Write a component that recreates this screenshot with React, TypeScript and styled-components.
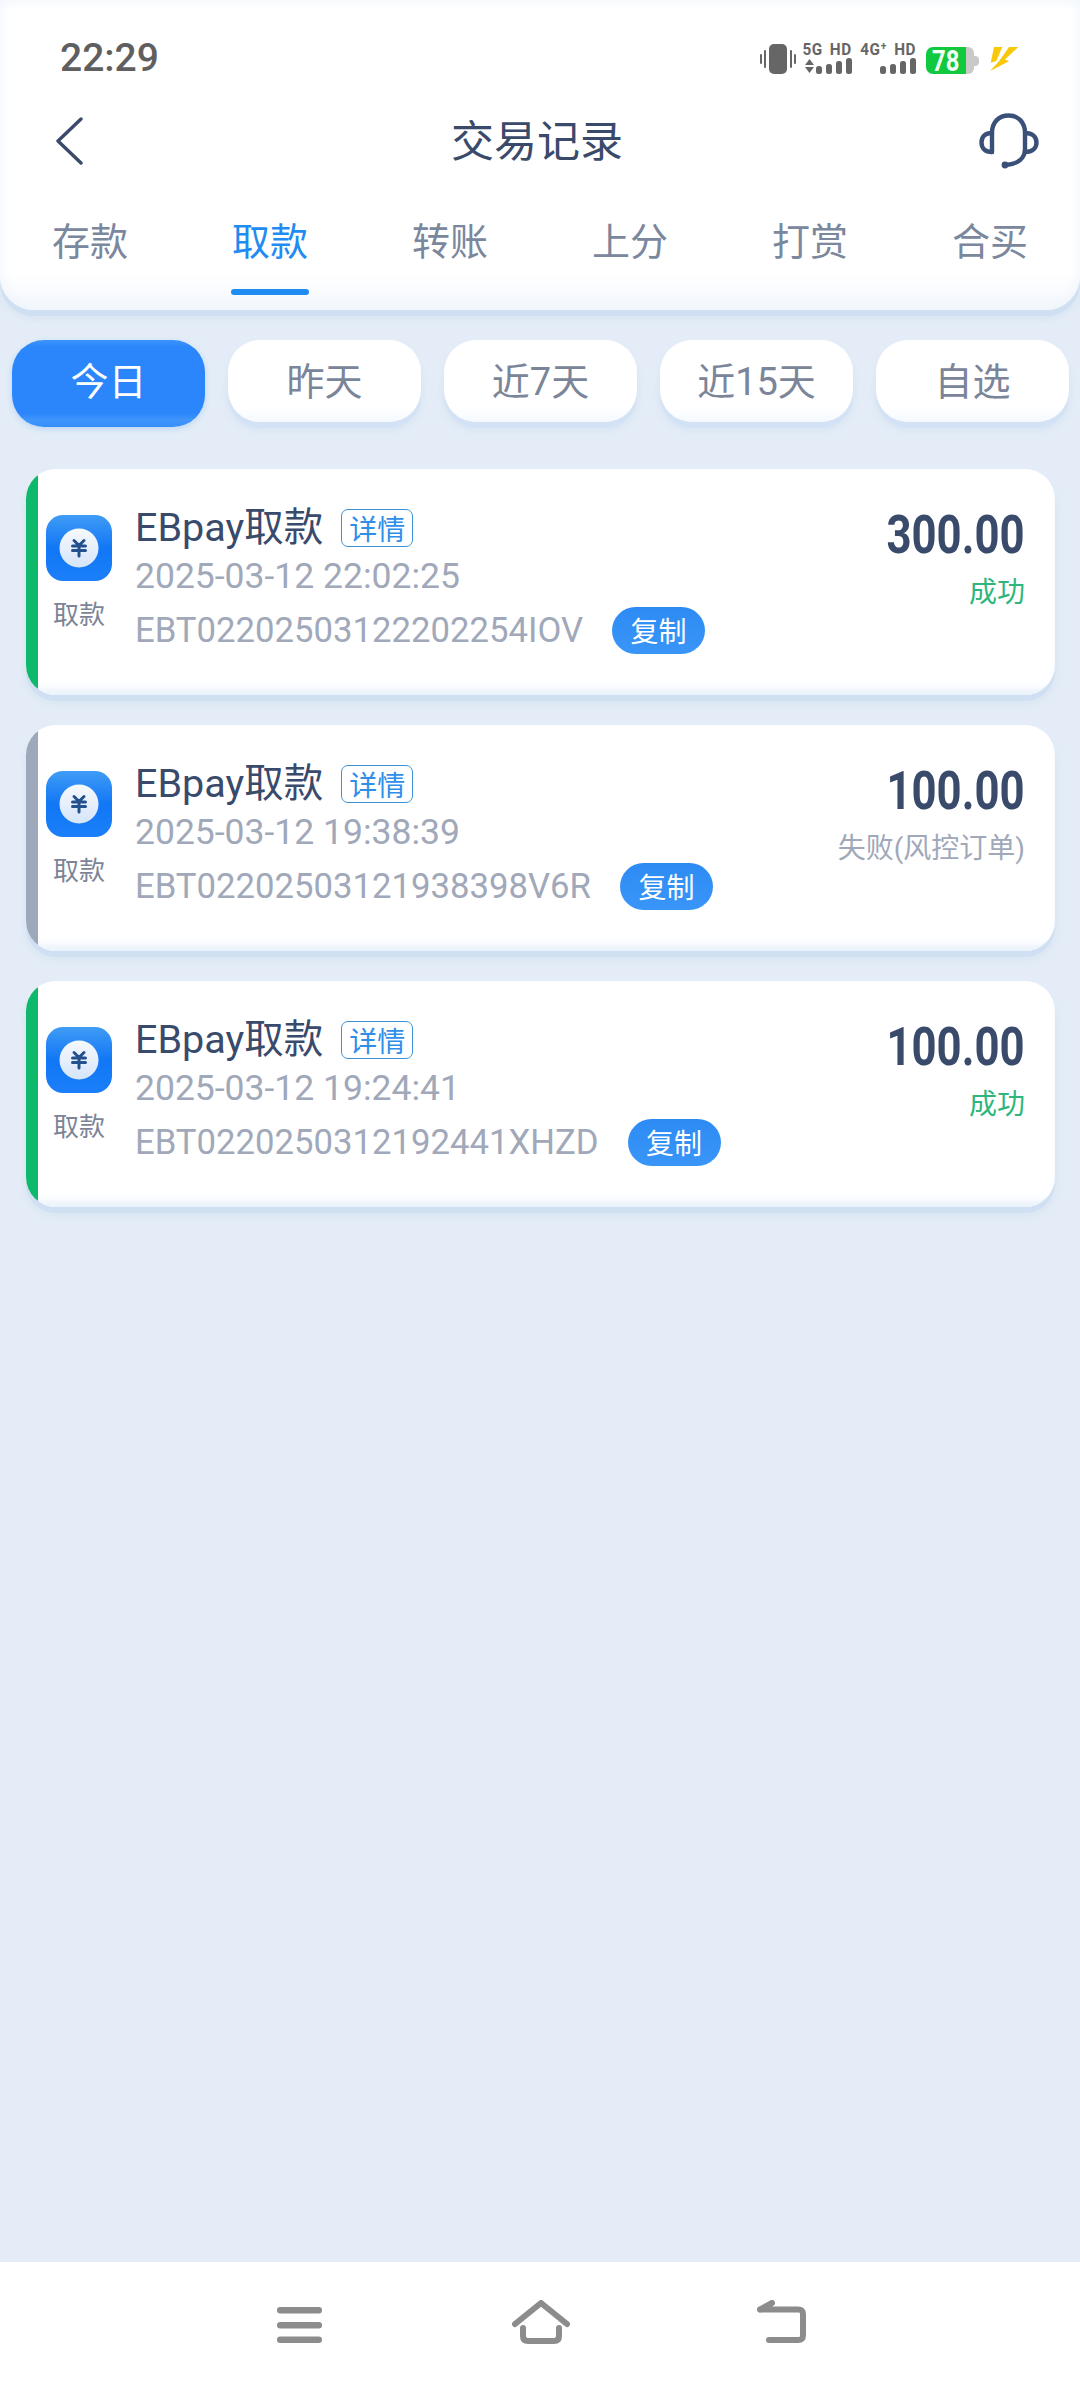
import React from "react";
import styled, { createGlobalStyle } from "styled-components";

const CJK = `"Roboto", "Noto Sans CJK SC", sans-serif`;

const GlobalStyle = createGlobalStyle`
  html, body {
    margin: 0;
    padding: 0;
    background: #e4edf7;
    font-family: ${CJK};
  }
  * {
    box-sizing: border-box;
  }
`;

const Page = styled.div`
  display: flex;
  flex-direction: column;
  width: 1080px;
  height: 2388px;
  overflow: hidden;
  background: #e4edf7;
`;

const Header = styled.header`
  height: 310px;
  background: linear-gradient(#fff 88%, #f3f7fd 100%);
  border-radius: 0 0 34px 34px;
  box-shadow: 0 6px 0 #cfe0f3, 0 8px 10px rgba(190, 210, 235, 0.35), inset 0 0 14px #eef4fb;
`;

const StatusBar = styled.div`
  display: flex;
  align-items: flex-start;
  justify-content: space-between;
  height: 100px;
  padding: 42px 61px 0 60px;
`;

const Time = styled.span`
  font-size: 39px;
  line-height: 32px;
  font-weight: 500;
  color: #5f5f5f;
`;

const StatusIcons = styled.div`
  display: flex;
  align-items: flex-start;
`;

const Network = styled.div<{ $width: number }>`
  display: flex;
  flex-direction: column;
  align-items: flex-end;
  justify-content: space-between;
  width: ${({ $width }) => $width}px;
  height: 32px;
  margin-left: 8px;
`;

const NetworkLabel = styled.span`
  font-size: 17px;
  line-height: 14px;
  font-weight: 700;
  letter-spacing: 0.6px;
  word-spacing: 3px;
  white-space: pre;
  color: #666;
  transform: scaleX(0.9);
  transform-origin: right center;
`;

const Battery = styled.div`
  display: flex;
  align-items: center;
  width: 53px;
  height: 27px;
  margin: 5px 0 0 10px;
`;

const BatteryFill = styled.div`
  display: flex;
  align-items: center;
  justify-content: center;
  width: 40px;
  height: 27px;
  border-radius: 7px 0 0 7px;
  background: #10c93f;
  font-size: 29px;
  font-weight: 700;
  color: #f2fff5;
`;

const BatteryDigits = styled.span`
  transform: scaleX(0.82);
`;

const BatteryRest = styled.div`
  width: 8px;
  height: 27px;
  border-radius: 0 6px 6px 0;
  background: #c9c9c9;
`;

const BatteryNib = styled.div`
  width: 5px;
  height: 10px;
  border-radius: 0 4px 4px 0;
  background: #c9c9c9;
`;

const NavBar = styled.div`
  display: flex;
  align-items: center;
  justify-content: space-between;
  height: 82px;
  padding: 0 41px 0 55px;
`;

const Title = styled.h1`
  margin: 2px 0 0 12px;
  font-size: 43px;
  line-height: 60px;
  font-weight: 400;
  color: #3a4a6b;
`;

const Tabs = styled.nav`
  display: grid;
  grid-template-columns: repeat(6, 180px);
`;

const Tab = styled.div<{ $active?: boolean }>`
  display: flex;
  flex-direction: column;
  align-items: center;
  padding-top: 31px;
  font-size: 38px;
  line-height: 58px;
  color: ${({ $active }) => ($active ? "#1e8cf0" : "#7b879d")};
`;

const TabBar = styled.div`
  width: 78px;
  height: 6px;
  margin-top: 18px;
  border-radius: 3px;
  background: #1e8cf0;
`;

const Main = styled.main`
  flex: 1;
  padding-top: 30px;
`;

const Filters = styled.div`
  display: flex;
  align-items: flex-start;
  justify-content: space-between;
  padding: 0 11px 0 12px;
`;

const Filter = styled.div<{ $active?: boolean }>`
  display: flex;
  align-items: center;
  justify-content: center;
  width: 193px;
  height: ${({ $active }) => ($active ? 87 : 82)}px;
  padding-bottom: ${({ $active }) => ($active ? 11 : 6)}px;
  border-radius: 32px;
  font-size: 38px;
  color: ${({ $active }) => ($active ? "#fff" : "#7b8599")};
  background: ${({ $active }) =>
    $active
      ? "linear-gradient(#3c94fb, #2b86fb 8%, #2b86fb 84%, #3f95fa 92%, #378ff9)"
      : "linear-gradient(#fff 82%, #f5f9fe)"};
  box-shadow: ${({ $active }) =>
    $active
      ? "0 2px 6px rgba(100, 160, 240, 0.3)"
      : "0 6px 0 #d3e2f5, 0 8px 8px rgba(190, 210, 235, 0.35)"};
`;

const CardList = styled.div`
  display: flex;
  flex-direction: column;
  gap: 30px;
  margin-top: 42px;
  padding: 0 25px 0 26px;
`;

const Card = styled.article`
  display: flex;
  height: 226px;
  overflow: hidden;
  border-radius: 30px;
  background: #fff;
  box-shadow: 0 6px 0 #cfe0f3, 0 8px 10px rgba(190, 210, 235, 0.35);
`;

const Stripe = styled.div<{ $color: string }>`
  flex: none;
  width: 12px;
  background: ${({ $color }) => $color};
`;

const CardBody = styled.div`
  display: flex;
  flex: 1;
  align-items: flex-start;
  padding: 35px 30px 0 8px;
  box-shadow: inset -2px -10px 10px -4px #e9f1fb;
`;

const TypeColumn = styled.div`
  display: flex;
  flex-direction: column;
  align-items: center;
  width: 66px;
  padding-top: 11px;
`;

const TypeLabel = styled.span`
  margin-top: 16px;
  font-size: 26px;
  line-height: 36px;
  color: #7c8596;
  white-space: nowrap;
`;

const Info = styled.div`
  flex: 1;
  margin-left: 23px;
`;

const TitleRow = styled.div`
  display: flex;
  align-items: center;
  height: 48px;
`;

const CardTitle = styled.span`
  margin-top: -9px;
  font-size: 39.5px;
  color: #3a4a6b;
`;

const DetailTag = styled.span`
  display: flex;
  align-items: center;
  justify-content: center;
  width: 72px;
  height: 38px;
  margin-left: 18px;
  border: 1px solid #3d93d8;
  border-radius: 7px;
  font-size: 28px;
  color: #2f8ee8;
`;

const DateText = styled.div`
  font-size: 35.5px;
  line-height: 48px;
  color: #a0a8b9;
`;

const RefRow = styled.div`
  display: flex;
  align-items: center;
  height: 60px;
`;

const RefText = styled.span`
  font-size: 34.7px;
  color: #a0a8b9;
`;

const CopyButton = styled.span`
  display: flex;
  align-items: center;
  justify-content: center;
  width: 93px;
  height: 47px;
  margin-left: 29px;
  border-radius: 24px;
  font-size: 28px;
  color: #fff;
  background: linear-gradient(#2c8bf3, #3a95f8);
`;

const Result = styled.div`
  display: flex;
  flex-direction: column;
  align-items: flex-end;
`;

const Amount = styled.span`
  font-size: 54px;
  line-height: 62px;
  font-weight: 700;
  color: #3a4a6b;
  transform: scaleX(0.81);
  transform-origin: right center;
`;

const Status = styled.span<{ $failed?: boolean }>`
  margin-top: 7px;
  font-size: 28px;
  line-height: 40px;
  color: ${({ $failed }) => ($failed ? "#a0a8b9" : "#2eb67d")};
`;

const BottomNav = styled.footer`
  display: flex;
  align-items: flex-start;
  height: 126px;
  padding: 38px 0 0 277px;
  background: #fff;
`;

const BottomIcon = styled.span<{ $gap: number }>`
  display: flex;
  margin-right: ${({ $gap }) => $gap}px;
`;

const VibrateIcon = () => (
  <svg width="36" height="30" viewBox="0 0 36 30" style={{ display: "block", marginTop: 2 }}>
    <rect x="9" y="0" width="18" height="30" rx="5" fill="#666" />
    <rect x="0" y="10" width="2" height="10" rx="1" fill="#666" />
    <rect x="4" y="6" width="2" height="18" rx="1" fill="#666" />
    <rect x="30" y="6" width="2" height="18" rx="1" fill="#666" />
    <rect x="34" y="10" width="2" height="10" rx="1" fill="#666" />
  </svg>
);

const SignalBars = ({ arrows }: { arrows?: boolean }) => (
  <svg width="48" height="16" viewBox="0 0 48 16" style={{ display: "block" }}>
    {arrows && <path d="M1 7 L5.5 1 L10 7 Z M1 9 L10 9 L5.5 15 Z" fill="#666" />}
    <rect x="12" y="8" width="6" height="8" rx="2.5" fill="#666" />
    <rect x="22" y="6" width="6" height="10" rx="2.5" fill="#666" />
    <rect x="32" y="3" width="6" height="13" rx="2.5" fill="#666" />
    <rect x="42" y="0" width="6" height="16" rx="2.5" fill="#666" />
  </svg>
);

const BoltIcon = () => (
  <svg width="30" height="26" viewBox="0 0 30 26" style={{ display: "block", margin: "4px 0 0 10px" }}>
    <path d="M5 1 L13.3 1 L7.3 15 L1.7 16.7 Z" fill="#f9c70c" />
    <path d="M20 1 L29.3 1 L16 13.5 L20 15.3 L1 25 L7 18.5 L10.5 14.5 Z" fill="#f9c70c" />
  </svg>
);

const BackIcon = () => (
  <svg width="28" height="48" viewBox="0 0 28 48" style={{ display: "block" }}>
    <path d="M26 2 L3 24 L26 46" fill="none" stroke="#3a4a6b" strokeWidth="3.4" strokeLinecap="round" strokeLinejoin="round" />
  </svg>
);

const HeadsetIcon = () => (
  <svg width="60" height="56" viewBox="0 0 60 56" style={{ display: "block" }}>
    <g fill="none" stroke="#3a5078" strokeWidth="4.4" strokeLinecap="round">
      <path d="M13 39 V20 C13 9 20 2.5 29.5 2.5 C39 2.5 46 9 46 20 V36 C46 45 39 51 27 52" />
      <path d="M13 20 C6 20 2.5 24 2.5 29.5 C2.5 35 6 39 13 39" />
      <path d="M46 20 C53.5 20 57.5 24 57.5 29.5 C57.5 35 53.5 39 46 39" />
    </g>
    <circle cx="26" cy="52" r="3.4" fill="#3a5078" />
  </svg>
);

const PayIcon = () => (
  <svg width="66" height="66" viewBox="0 0 66 66" style={{ display: "block" }}>
    <defs>
      <linearGradient id="payBg" x1="0" y1="0" x2="0" y2="1">
        <stop offset="0" stopColor="#3f9cf6" />
        <stop offset="0.5" stopColor="#1277f5" />
        <stop offset="1" stopColor="#1b7ffa" />
      </linearGradient>
      <linearGradient id="payCoin" x1="0" y1="0" x2="0" y2="1">
        <stop offset="0" stopColor="#f6f9fe" />
        <stop offset="1" stopColor="#d6e5f8" />
      </linearGradient>
    </defs>
    <rect width="66" height="66" rx="17" fill="url(#payBg)" />
    <circle cx="33" cy="33" r="19.5" fill="url(#payCoin)" />
    <path
      d="M28 25.5 L33 30.5 L38 25.5 M26.5 31 H39.5 M26.5 35.5 H39.5 M33 31 V41"
      fill="none"
      stroke="#25508f"
      strokeWidth="3"
      strokeLinecap="round"
    />
  </svg>
);

const MenuIcon = () => (
  <svg width="45" height="36" viewBox="0 0 45 36" style={{ display: "block", marginTop: 7 }}>
    <rect x="0" y="0" width="45" height="6.4" rx="3.2" fill="#8c8c8c" />
    <rect x="0" y="15" width="45" height="6.4" rx="3.2" fill="#8c8c8c" />
    <rect x="0" y="29.6" width="45" height="6.4" rx="3.2" fill="#8c8c8c" />
  </svg>
);

const HomeIcon = () => (
  <svg width="58" height="44" viewBox="0 0 58 44" style={{ display: "block" }}>
    <path
      d="M3 24 L29 3 L55 24 M11 28 V36 C11 39.5 13 41 16 41 H42 C45 41 47 39.5 47 36 V28"
      fill="none"
      stroke="#8c8c8c"
      strokeWidth="6"
      strokeLinecap="round"
      strokeLinejoin="round"
    />
  </svg>
);

const ReturnIcon = () => (
  <svg width="49" height="43" viewBox="0 0 49 43" style={{ display: "block" }}>
    <path
      d="M3 9.5 H41 C44.5 9.5 46 11 46 14.5 V35 C46 38.5 44.5 40 41 40 H12 M3 9.5 L15 3"
      fill="none"
      stroke="#8c8c8c"
      strokeWidth="6"
      strokeLinecap="round"
      strokeLinejoin="round"
    />
  </svg>
);

const tabs = ["存款", "取款", "转账", "上分", "打赏", "合买"];
const filters = ["今日", "昨天", "近7天", "近15天", "自选"];

const records = [
  { time: "2025-03-12 22:02:25", ref: "EBT02202503122202254IOV", amount: "300.00", status: "成功", failed: false },
  { time: "2025-03-12 19:38:39", ref: "EBT02202503121938398V6R", amount: "100.00", status: "失败(风控订单)", failed: true },
  { time: "2025-03-12 19:24:41", ref: "EBT0220250312192441XHZD", amount: "100.00", status: "成功", failed: false },
];

export default function App() {
  return (
    <Page>
      <GlobalStyle />
      <Header>
        <StatusBar>
          <Time>22:29</Time>
          <StatusIcons>
            <VibrateIcon />
            <Network $width={48}>
              <NetworkLabel>5G HD</NetworkLabel>
              <SignalBars arrows />
            </Network>
            <Network $width={56}>
              <NetworkLabel>4G⁺ HD</NetworkLabel>
              <SignalBars />
            </Network>
            <Battery>
              <BatteryFill>
                <BatteryDigits>78</BatteryDigits>
              </BatteryFill>
              <BatteryRest />
              <BatteryNib />
            </Battery>
            <BoltIcon />
          </StatusIcons>
        </StatusBar>
        <NavBar>
          <BackIcon />
          <Title>交易记录</Title>
          <HeadsetIcon />
        </NavBar>
        <Tabs>
          {tabs.map((tab) => (
            <Tab key={tab} $active={tab === "取款"}>
              {tab}
              {tab === "取款" && <TabBar />}
            </Tab>
          ))}
        </Tabs>
      </Header>
      <Main>
        <Filters>
          {filters.map((filter) => (
            <Filter key={filter} $active={filter === "今日"}>
              {filter}
            </Filter>
          ))}
        </Filters>
        <CardList>
          {records.map((record) => (
            <Card key={record.ref}>
              <Stripe $color={record.failed ? "#9ea8bb" : "#0fb96b"} />
              <CardBody>
                <TypeColumn>
                  <PayIcon />
                  <TypeLabel>取款</TypeLabel>
                </TypeColumn>
                <Info>
                  <TitleRow>
                    <CardTitle>EBpay取款</CardTitle>
                    <DetailTag>详情</DetailTag>
                  </TitleRow>
                  <DateText>{record.time}</DateText>
                  <RefRow>
                    <RefText>{record.ref}</RefText>
                    <CopyButton>复制</CopyButton>
                  </RefRow>
                </Info>
                <Result>
                  <Amount>{record.amount}</Amount>
                  <Status $failed={record.failed}>{record.status}</Status>
                </Result>
              </CardBody>
            </Card>
          ))}
        </CardList>
      </Main>
      <BottomNav>
        <BottomIcon $gap={190}>
          <MenuIcon />
        </BottomIcon>
        <BottomIcon $gap={187}>
          <HomeIcon />
        </BottomIcon>
        <BottomIcon $gap={0}>
          <ReturnIcon />
        </BottomIcon>
      </BottomNav>
    </Page>
  );
}
